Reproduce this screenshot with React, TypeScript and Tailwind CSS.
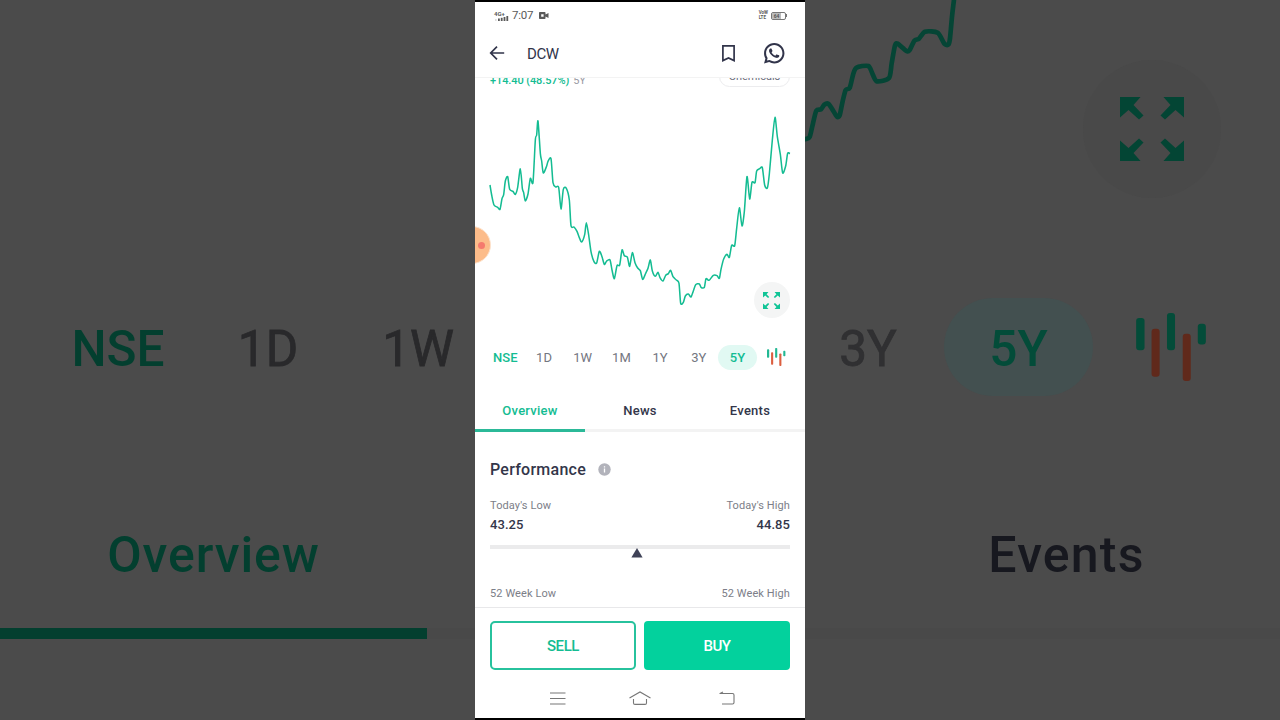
import { RiWhatsappLine } from "react-icons/ri";

const RANGES = ["NSE", "1D", "1W", "1M", "1Y", "3Y", "5Y"];
const TABS = ["Overview", "News", "Events"];

// five year price line, viewBox 990x720
const PRICES: number[][] = [
  [45, 255], [50, 285], [57, 315], [68, 322], [75, 328], [81, 296], [86, 284], [91, 243], [98, 230],
  [104, 268], [114, 274], [121, 283], [128, 262], [136, 206], [142, 265], [146, 278], [151, 303],
  [159, 282], [166, 235], [174, 247], [181, 120], [185, 105], [189, 63], [196, 160], [200, 183],
  [205, 219], [215, 198], [219, 184], [228, 176], [234, 248], [242, 261], [251, 262], [258, 327],
  [265, 268], [274, 265], [283, 300], [288, 377], [297, 381], [306, 394], [313, 413], [320, 426],
  [329, 404], [334, 368], [341, 405], [348, 455], [357, 485], [365, 489], [373, 454], [381, 470],
  [388, 493], [395, 483], [405, 480], [411, 510], [418, 536], [426, 497], [434, 495], [441, 450],
  [448, 467], [457, 471], [464, 499], [472, 458], [480, 488], [488, 504], [496, 512], [503, 538],
  [512, 520], [519, 505], [526, 480], [532, 513], [541, 529], [549, 517], [555, 533], [564, 543],
  [572, 526], [580, 521], [587, 511], [594, 530], [604, 540], [612, 550], [617, 610], [625, 607],
  [631, 588], [640, 582], [648, 591], [655, 573], [662, 554], [673, 552], [679, 563], [688, 562],
  [693, 536], [702, 541], [715, 526], [726, 527], [733, 535], [738, 508], [746, 477], [756, 463],
  [763, 472], [770, 436], [779, 437], [785, 385], [793, 323], [801, 378], [808, 335], [816, 230],
  [824, 297], [831, 247], [840, 248], [845, 213], [854, 206], [862, 203], [869, 255], [877, 264],
  [883, 222], [892, 120], [900, 52], [907, 110], [916, 163], [923, 219], [932, 198], [938, 160],
  [945, 161],
];

const PRICES_ZOOMED: number[][] = [
  [-10, 418], [2, 417], [14, 411], [24, 370], [34, 332], [48, 328], [58, 314], [70, 311], [82, 328],
  [96, 350], [104, 346], [112, 308], [122, 270], [134, 264], [144, 225], [154, 203], [190, 198],
  [204, 225], [216, 244], [252, 234], [260, 190], [270, 136], [278, 131], [304, 153], [314, 150],
  [328, 122], [342, 116], [360, 95], [398, 98], [418, 131], [430, 134], [435, 115], [441, 50],
  [448, -10],
];

function smooth(points: number[][]) {
  let d = `M${points[0][0]} ${points[0][1]}`;
  for (let i = 0; i < points.length - 1; i++) {
    const p0 = points[i - 1] || points[i];
    const p1 = points[i];
    const p2 = points[i + 1];
    const p3 = points[i + 2] || p2;
    d += `C${p1[0] + (p2[0] - p0[0]) / 8} ${p1[1] + (p2[1] - p0[1]) / 8} ${p2[0] - (p3[0] - p1[0]) / 8} ${p2[1] - (p3[1] - p1[1]) / 8} ${p2[0]} ${p2[1]}`;
  }
  return d;
}

function ExpandIcon({ className }: { className: string }) {
  const arrow = "M0 0H20.5L13.5 8L23.5 18.5L19 22.5L8.5 13L0 20.5Z";
  return (
    <svg viewBox="0 0 64 64" className={className} fill="currentColor">
      <path d={arrow} />
      <path d={arrow} transform="matrix(-1 0 0 1 64 0)" />
      <path d={arrow} transform="matrix(1 0 0 -1 0 64)" />
      <path d={arrow} transform="matrix(-1 0 0 -1 64 64)" />
    </svg>
  );
}

function CandlesIcon({ className, up, down }: { className: string; up: string; down: string }) {
  return (
    <svg viewBox="0 0 208 203" className={className}>
      <rect x="0" y="15" width="25" height="96" rx="9" fill={up} />
      <rect x="46" y="47" width="24" height="143" rx="9" fill={down} />
      <rect x="92" y="0" width="24" height="111" rx="9" fill={up} />
      <rect x="139" y="62" width="24" height="141" rx="9" fill={down} />
      <rect x="184" y="32" width="24" height="62" rx="9" fill={up} />
    </svg>
  );
}

function StatusBar() {
  return (
    <div className="flex h-7 items-center justify-between pr-[18px] pb-px pl-[19px] text-[#5a5a5a]">
      <div className="flex items-center">
        <div className="flex w-[15px] flex-col">
          <span className="text-[6px] leading-[5px] font-bold">4G+</span>
          <svg viewBox="0 0 15 5" className="h-[5px] w-[15px]" fill="currentColor">
            <rect x="1" y="3" width="1.6" height="2" opacity="0.2" />
            <rect x="4" y="2.5" width="1.8" height="2.5" />
            <rect x="6.8" y="1.8" width="1.8" height="3.2" />
            <rect x="9.6" y="1" width="1.8" height="4" />
            <rect x="12.4" y="0" width="1.8" height="5" />
          </svg>
        </div>
        <span className="ml-[3px] text-[11.5px] leading-none tracking-[-0.2px]">7:07</span>
        <svg viewBox="0 0 10 7" className="ml-[6px] h-[7px] w-[10px]" fill="currentColor">
          <path fillRule="evenodd" d="M0 0.8Q0 0 .8 0H5.7Q6.5 0 6.5.8V2.4L9.5 1V6L6.5 4.6V6.2Q6.5 7 5.7 7H.8Q0 7 0 6.2ZM2.2 2.2V4.8H4.6V2.2Z" />
        </svg>
      </div>
      <div className="flex items-center gap-[3px]">
        <div className="flex flex-col text-[4.5px] leading-[4.5px] font-bold">
          <span>VoW</span>
          <span>LTE</span>
        </div>
        <div className="flex items-center">
          <div className="flex h-2 w-[15px] items-center rounded-[2px] border border-[#777]">
            <div className="h-full w-[9px] bg-[#bbb] text-center text-[5px] leading-[6px] font-bold text-[#555]">
              64
            </div>
          </div>
          <div className="h-[3px] w-px bg-[#777]" />
        </div>
      </div>
    </div>
  );
}

function Header() {
  return (
    <header className="flex h-12 items-center border-b border-[#f3f3f3] pr-[19px] pl-[14px] text-[#31344a]">
      <svg viewBox="0 0 16 14" className="-mt-px h-[14px] w-4" fill="none" stroke="currentColor" strokeWidth="1.7">
        <path d="M15.2 7H2M8 .7L1.7 7L8 13.3" />
      </svg>
      <h1 className="ml-[22px] flex-1 pt-[2px] text-[15px] leading-none tracking-[-0.4px]">DCW</h1>
      <svg viewBox="0 0 13 17" className="h-[17px] w-[13px]" fill="none" stroke="currentColor" strokeWidth="1.7">
        <path d="M.9 .9H12.1V15.6L6.5 13L.9 15.6Z" />
      </svg>
      <RiWhatsappLine className="ml-[27px] size-[24.5px]" />
    </header>
  );
}

function PriceChart() {
  return (
    <div className="relative h-60">
      <svg viewBox="0 0 990 720" className="h-60 w-[330px]" fill="none">
        <path d={smooth(PRICES)} stroke="#14bc92" strokeWidth="4.6" strokeLinejoin="round" />
      </svg>
      <div className="absolute right-[15px] bottom-[22px] flex size-9 items-center justify-center rounded-full bg-[#f4f5f5]">
        <ExpandIcon className="-ml-px size-[17px] text-[#10c496]" />
      </div>
      {/* screen recorder bubble */}
      <div className="absolute top-[126px] -left-[22px] flex size-[38px] items-center justify-end rounded-full border-[1.5px] border-[#fde3cd] bg-[#fcbc8a] pr-[5px]">
        <div className="size-[7px] rounded-full bg-[#f57a6e]" />
      </div>
    </div>
  );
}

function RangeRow() {
  return (
    <div className="flex h-[34px] items-center pl-[11px] text-[13px] text-[#74767f]">
      {RANGES.map((range) => (
        <div
          key={range}
          className={
            range === "5Y"
              ? "flex h-[25px] w-[38.7px] items-center justify-center rounded-full bg-[#e1f9f3] pt-px font-medium text-[#14bc92]"
              : range === "NSE"
                ? "flex w-[38.7px] justify-center pt-px font-medium text-[#14bc92]"
                : "flex w-[38.7px] justify-center pt-px"
          }
        >
          {range}
        </div>
      ))}
      <CandlesIcon className="ml-[10.5px] h-[18px] w-[18.4px]" up="#22b893" down="#dc5f40" />
    </div>
  );
}

function Performance() {
  return (
    <section className="px-[15px] pt-7 text-[#44475b]">
      <div className="flex h-5 items-center">
        <h2 className="text-base font-medium tracking-[0.25px] text-[#33364a]">Performance</h2>
        <svg viewBox="0 0 13 13" className="-mt-px ml-3 size-[13px]">
          <circle cx="6.5" cy="6.5" r="6.2" fill="#b2b3bb" />
          <path d="M6.5 5.6V9.6M6.5 3.2V4.6" stroke="#fff" strokeWidth="1.3" />
        </svg>
      </div>
      <div className="mt-[18px] flex h-4 items-center justify-between text-[11px] tracking-[0.1px] text-[#7c7e88]">
        <span>Today's Low</span>
        <span>Today's High</span>
      </div>
      <div className="mt-[3px] flex h-4 items-center justify-between text-[13px] font-medium tracking-[0.05px] text-[#33364a]">
        <span>43.25</span>
        <span>44.85</span>
      </div>
      <div className="mt-3 h-[3.5px] bg-[#ebebec]" />
      <svg viewBox="0 0 12 10" className="-mt-[0.5px] ml-[141px] h-[10px] w-3">
        <path d="M6 0L11.6 9.5H.4Z" fill="#3f4257" />
      </svg>
      <div className="mt-7 flex h-4 items-center justify-between text-[11px] tracking-[0.1px] text-[#7c7e88]">
        <span>52 Week Low</span>
        <span>52 Week High</span>
      </div>
    </section>
  );
}

function Phone() {
  return (
    <main className="flex h-[720px] w-[330px] flex-col overflow-hidden border-y-2 border-black bg-white">
      <StatusBar />
      <Header />
      <div className="h-[529px] overflow-hidden">
        <div className="flex h-[22px] items-start justify-between overflow-hidden px-[15px]">
          <div className="-mt-[5px] text-[11px] leading-4 tracking-[-0.1px]">
            <span className="font-medium text-[#14bc92]">+14.40 (48.57%)</span>
            <span className="ml-1 text-[#9b9ca5]">5Y</span>
          </div>
          <div className="-mt-3 flex h-[21px] w-[71px] items-center justify-center rounded-full border border-[#ececee] pt-[2px] text-[11px] text-[#6c6e7d]">
            Chemicals
          </div>
        </div>
        <PriceChart />
        <RangeRow />
        <nav className="mt-[15px] flex h-[43px] border-b-[3px] border-[#f3f3f3] text-[13px] font-medium tracking-[0.25px] text-[#33364a]">
          {TABS.map((tab) => (
            <div
              key={tab}
              className={
                tab === "Overview"
                  ? "-mb-[3px] flex flex-1 items-center justify-center border-b-[3px] border-[#2bb998] pt-[3px] text-[#14bc92]"
                  : "flex flex-1 items-center justify-center pt-[3px]"
              }
            >
              {tab}
            </div>
          ))}
        </nav>
        <Performance />
      </div>
      <div className="flex h-[79px] gap-2 border-t border-[#e8e8ea] px-[15px] pt-[13px] text-[15px] font-medium tracking-[-0.4px]">
        <button className="h-[49px] w-[146px] rounded-[5px] border-2 border-[#27c29d] pt-px text-[#14bc92]">SELL</button>
        <button className="h-[49px] w-[146px] rounded-[4px] bg-[#03d19d] pt-px text-white">BUY</button>
      </div>
      <div className="flex flex-1 items-start pt-[5px] pl-[75px] text-[#777]">
        <svg viewBox="0 0 16 14" className="h-[14px] w-4" stroke="currentColor" strokeWidth="1.1">
          <path d="M0 2H15.5M0 7.5H15.5M0 13H15.5" />
        </svg>
        <svg viewBox="0 0 22 14" className="ml-[63px] h-[14px] w-[22px]" fill="none" stroke="currentColor" strokeWidth="1.1">
          <path d="M.5 7L11 1L21.5 7M4.5 8V12Q4.5 13.4 6 13.4H16Q17.5 13.4 17.5 12V8" />
        </svg>
        <svg viewBox="0 0 16 14" className="ml-[68px] h-[14px] w-4" fill="none" stroke="currentColor" strokeWidth="1.1">
          <path d="M.5 2.5H13.5Q15 2.5 15 4V11.5Q15 13 13.5 13H3M4 1L1 2.5" />
        </svg>
      </div>
    </main>
  );
}

function LeftBackdrop() {
  return (
    <aside className="h-[720px] w-[475px] overflow-hidden bg-[#4b4b4b] pt-[300px]">
      <div className="flex h-[98px] items-center pl-[43px] text-[49.5px] text-[#29292b]">
        <span className="w-[150px] shrink-0 text-center font-medium text-[#033f2f]">NSE</span>
        <span className="w-[150px] shrink-0 text-center [-webkit-text-stroke:0.8px_#29292b]">1D</span>
        <span className="w-[150px] shrink-0 text-center [-webkit-text-stroke:0.8px_#29292b]">1W</span>
      </div>
      <div className="mt-[74px] flex h-[167px] border-b-[11px] border-[#494949]">
        <div className="-mb-[11px] flex w-[427px] items-center justify-center border-b-[11px] border-[#033f2f] pt-[10px] text-[50px] font-medium tracking-[0.9px] text-[#033f2f]">
          Overview
        </div>
      </div>
    </aside>
  );
}

function RightBackdrop() {
  return (
    <aside className="h-[720px] w-[475px] overflow-hidden bg-[#4b4b4b]">
      <div className="relative h-[298px]">
        <svg viewBox="0 0 1425 660" className="h-[220px] w-[475px]" fill="none">
          <path d={smooth(PRICES_ZOOMED)} stroke="#054535" strokeWidth="14" strokeLinejoin="round" />
        </svg>
        <div className="absolute top-[60px] left-[278px] flex size-[138px] items-center justify-center rounded-full bg-[#494949]">
          <ExpandIcon className="size-[64px] text-[#034534]" />
        </div>
      </div>
      <div className="-ml-[13px] flex h-[98px] items-center text-[49.5px] text-[#303032]">
        <span className="w-[152px] pt-[5px] text-center [-webkit-text-stroke:0.8px_#303032]">3Y</span>
        <span className="flex h-[98px] w-[149px] items-center justify-center rounded-full bg-[#435050] pt-[5px] font-medium text-[#034c39]">
          5Y
        </span>
        <CandlesIcon className="ml-[43px] h-[68px] w-[70px]" up="#034c39" down="#60291b" />
      </div>
      <div className="mt-[76px] flex h-[167px] border-b-[11px] border-[#494949]">
        <div className="ml-[48px] flex w-[427px] items-center justify-center pt-[10px] text-[50px] font-medium tracking-[1.2px] text-[#17181f]">
          Events
        </div>
      </div>
    </aside>
  );
}

export default function App() {
  return (
    <div className="flex h-[720px] w-[1280px] overflow-hidden bg-black font-['Roboto',sans-serif]">
      <LeftBackdrop />
      <Phone />
      <RightBackdrop />
    </div>
  );
}
